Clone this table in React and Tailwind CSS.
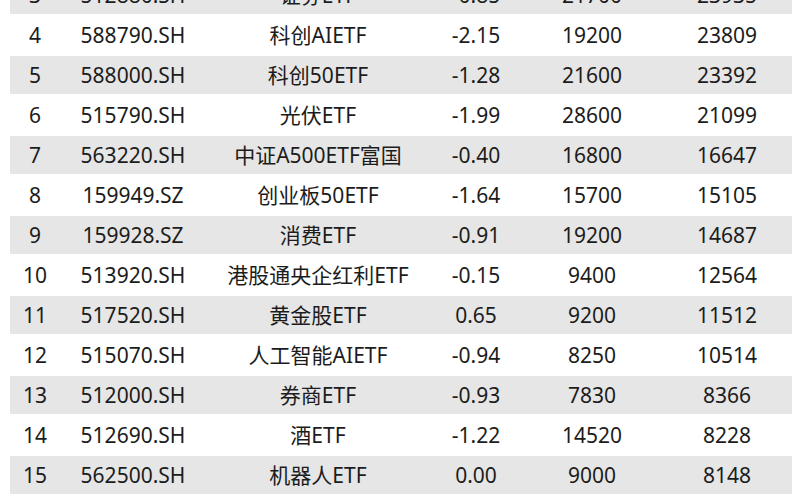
const ROWS = [
  ["3", "512880.SH", "证券ETF", "-0.85", "21700", "23935"],
  ["4", "588790.SH", "科创AIETF", "-2.15", "19200", "23809"],
  ["5", "588000.SH", "科创50ETF", "-1.28", "21600", "23392"],
  ["6", "515790.SH", "光伏ETF", "-1.99", "28600", "21099"],
  ["7", "563220.SH", "中证A500ETF富国", "-0.40", "16800", "16647"],
  ["8", "159949.SZ", "创业板50ETF", "-1.64", "15700", "15105"],
  ["9", "159928.SZ", "消费ETF", "-0.91", "19200", "14687"],
  ["10", "513920.SH", "港股通央企红利ETF", "-0.15", "9400", "12564"],
  ["11", "517520.SH", "黄金股ETF", "0.65", "9200", "11512"],
  ["12", "515070.SH", "人工智能AIETF", "-0.94", "8250", "10514"],
  ["13", "512000.SH", "券商ETF", "-0.93", "7830", "8366"],
  ["14", "512690.SH", "酒ETF", "-1.22", "14520", "8228"],
  ["15", "562500.SH", "机器人ETF", "0.00", "9000", "8148"],
  ["16", "515880.SH", "通信ETF", "-1.60", "11900", "8050"],
];

const COLS = ["w-[50px]", "w-[146px]", "w-[224px]", "w-[92px]", "w-[140px]", "w-[130px]"];

export default function App() {
  return (
    <div
      className="w-[800px] h-[500px] overflow-hidden bg-white text-[#1c1c1c] text-[21px]"
      style={{ fontFamily: '"Noto Sans", "Noto Sans CJK SC", sans-serif' }}
    >
      <div className="-mt-[24px] pl-[10px] pr-[8px] flex flex-col">
        {ROWS.map((row, i) => (
          <div
            key={row[0]}
            className={
              i % 2 === 0
                ? "flex items-center h-[38px] bg-[#e6e6e6]"
                : "flex items-center h-[42px] bg-white"
            }
          >
            {row.map((cell, j) => (
              <div key={j} className={`${COLS[j]} shrink-0 text-center whitespace-nowrap leading-none`}>
                {cell}
              </div>
            ))}
          </div>
        ))}
      </div>
    </div>
  );
}
